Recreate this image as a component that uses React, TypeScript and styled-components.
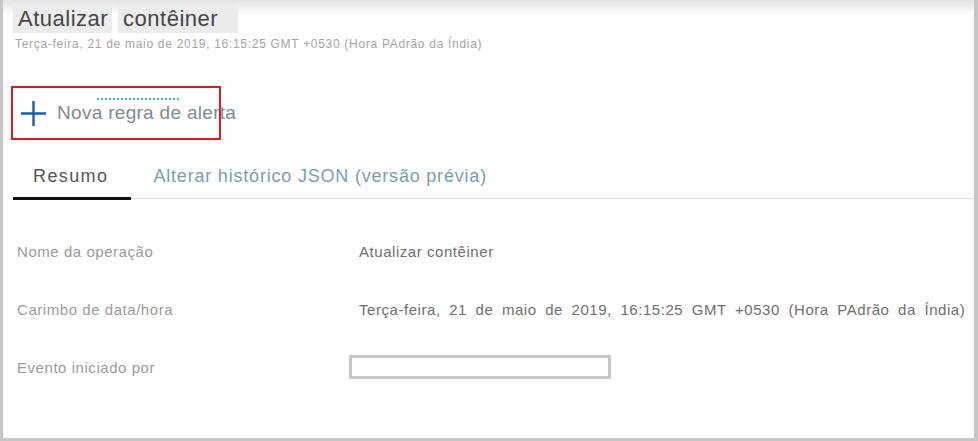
import React from "react";
import styled, { createGlobalStyle } from "styled-components";

const Global = createGlobalStyle`
  html, body { margin: 0; padding: 0; background: #fff; overflow: hidden; }
  body { font-family: "Liberation Sans", Arial, sans-serif; }
`;

const Frame = styled.div`
  box-sizing: border-box;
  width: 978px;
  height: 441px;
  border-left: 3px solid #c6c6c6;
  border-right: 4px solid #c6c6c6;
  border-bottom: 3px solid #c6c6c6;
  background: linear-gradient(#e2e2e2 0, #f6f6f6 10px, #fff 16px);
  display: flex;
  flex-direction: column;
`;

const Header = styled.div`
  padding: 4px 0 0 10px;
`;

const Title = styled.h1`
  margin: 0;
  display: flex;
  gap: 6px;
  font-weight: 400;
  font-size: 22px;
  letter-spacing: 0.5px;
  color: #454545;
  line-height: 29px;
`;

const Chip = styled.span<{ $pad?: number }>`
  background: #ececec;
  padding: 0 ${(p) => p.$pad ?? 4}px 0 5px;
`;

const Subtitle = styled.div`
  margin: 4px 0 0 2px;
  font-size: 12px;
  letter-spacing: 0.7px;
  color: #a4a4a4;
  white-space: nowrap;
`;

const AlertButton = styled.button`
  margin: 35px 0 0 8px;
  width: 210px;
  height: 54px;
  box-sizing: border-box;
  border: 2px solid #e8141e;
  background: #fff;
  display: flex;
  align-items: center;
  gap: 10px;
  padding: 0 0 0 7px;
  overflow: visible;
  font-family: inherit;
  font-size: 19px;
  letter-spacing: 0.3px;
  color: #7d8c90;
  white-space: nowrap;
  cursor: pointer;
  svg {
    flex-shrink: 0;
  }
`;

const Label = styled.span`
  position: relative;
  flex-shrink: 0;
  &::before {
    content: "";
    position: absolute;
    left: 40px;
    width: 82px;
    top: -4px;
    border-top: 2px dotted #4ab4d4;
  }
`;

const Tabs = styled.div`
  margin: 14px 0 0 10px;
  display: flex;
  align-items: flex-end;
  gap: 22px;
  border-bottom: 1px solid #dcdcdc;
`;

const Tab = styled.div<{ $active?: boolean }>`
  height: 44px;
  box-sizing: border-box;
  padding: ${(p) => (p.$active ? "0 23px 0 20px" : "0")};
  display: flex;
  align-items: center;
  font-size: 18px;
  letter-spacing: ${(p) => (p.$active ? "1.4px" : "0.8px")};
  color: ${(p) => (p.$active ? "#555" : "#7a9bbb")};
  border-bottom: ${(p) => (p.$active ? "3px solid #111" : "none")};
  margin-bottom: ${(p) => (p.$active ? "-2px" : "0")};
`;

const Grid = styled.div`
  margin: 23px 0 0 14px;
  display: grid;
  grid-template-columns: 342px 1fr;
  grid-auto-rows: 58px;
  align-items: center;
  font-size: 15px;
  letter-spacing: 0.55px;
`;

const Key = styled.div`
  color: #9b9b9b;
`;

const Value = styled.div<{ $wide?: boolean }>`
  color: #6e6e6e;
  word-spacing: ${(p) => (p.$wide ? "3.85px" : "0")};
  white-space: nowrap;
`;

const EmptyBox = styled.div`
  margin-left: -10px;
  width: 262px;
  height: 24px;
  box-sizing: border-box;
  border: 3px solid #c6c6c6;
`;

const Plus = () => (
  <svg width="27" height="27" viewBox="0 0 27 27">
    <path d="M13.5 1v25M1 13.5h25" stroke="#1b5ea8" strokeWidth="2.4" />
  </svg>
);

const date = "Terça-feira, 21 de maio de 2019, 16:15:25 GMT +0530 (Hora PAdrão da Índia)";

export default function App() {
  return (
    <Frame>
      <Global />
      <Header>
        <Title>
          <Chip>Atualizar</Chip>
          <Chip $pad={20}>contêiner</Chip>
        </Title>
        <Subtitle>{date}</Subtitle>
      </Header>
      <AlertButton>
        <Plus />
        <Label>Nova regra de alerta</Label>
      </AlertButton>
      <Tabs>
        <Tab $active>Resumo</Tab>
        <Tab>Alterar histórico JSON (versão prévia)</Tab>
      </Tabs>
      <Grid>
        <Key>Nome da operação</Key>
        <Value>Atualizar contêiner</Value>
        <Key>Carimbo de data/hora</Key>
        <Value $wide>{date}</Value>
        <Key>Evento iniciado por</Key>
        <Value>
          <EmptyBox />
        </Value>
      </Grid>
    </Frame>
  );
}
